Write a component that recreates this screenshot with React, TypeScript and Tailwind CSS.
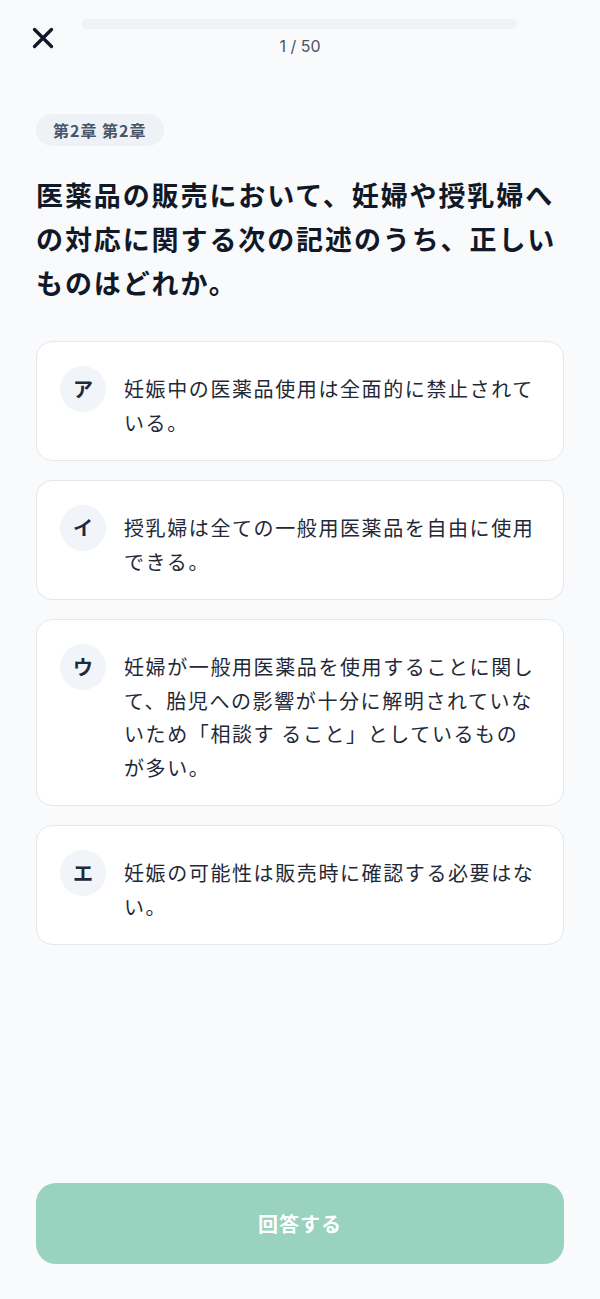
// Quiz question screen — single choice, nothing selected yet

type Option = {
  key: string;
  text: string;
};

const options: Option[] = [
  { key: 'ア', text: '妊娠中の医薬品使用は全面的に禁止されている。' },
  { key: 'イ', text: '授乳婦は全ての一般用医薬品を自由に使用できる。' },
  {
    key: 'ウ',
    text: '妊婦が一般用医薬品を使用することに関して、胎児への影響が十分に解明されていないため「相談す ること」としているものが多い。',
  },
  { key: 'エ', text: '妊娠の可能性は販売時に確認する必要はない。' },
];

function CloseIcon() {
  return (
    <svg width="22" height="22" viewBox="0 0 22 22" fill="none" aria-hidden="true">
      <path
        d="M2.5 2.5L19.5 19.5M19.5 2.5L2.5 19.5"
        stroke="#0f172a"
        strokeWidth="3.3"
        strokeLinecap="round"
      />
    </svg>
  );
}

function OptionCard({ option }: { option: Option }) {
  return (
    <button
      type="button"
      className="flex w-full items-start gap-[18px] rounded-2xl border border-[#e5e7eb] bg-white pb-[21px] pl-[23px] pr-6 pt-6 text-left"
    >
      <span className="flex h-[46px] w-[46px] shrink-0 items-center justify-center rounded-full bg-[#f1f5f9] text-[20px] font-bold text-[#1e293b]">
        {option.key}
      </span>
      <span className="mt-[6px] flex-1 text-[20px] leading-[33.5px] tracking-[1.6px] text-[#1f2937]">
        {option.text}
      </span>
    </button>
  );
}

export default function App() {
  const current = 1;
  const total = 50;
  const progress = (current / total) * 100;

  return (
    <div className="flex min-h-screen flex-col bg-[#f9fafb] font-['Noto_Sans_CJK_JP','Noto_Sans',sans-serif]">
      {/* Header: close + progress */}
      <header className="grid grid-cols-[50px_1fr_50px] px-8 pt-[19px]">
        <button type="button" aria-label="閉じる" className="mt-[8px] self-start">
          <CloseIcon />
        </button>
        <div className="flex flex-col items-center">
          <div className="h-[10px] w-full overflow-hidden rounded-full bg-[#f1f4f7]">
            <div
              className="h-full rounded-full bg-[#edf5f2]"
              style={{ width: `${progress}%` }}
            />
          </div>
          <p className="mt-[5px] font-['Inter',sans-serif] text-[16px] leading-6 text-[#4b5563]">
            {current} / {total}
          </p>
        </div>
        <div />
      </header>

      {/* Question */}
      <main className="px-9 pt-[56px]">
        <span className="inline-flex h-8 items-center rounded-full bg-[#eef2f6] px-[17px] text-[16px] font-bold tracking-[1px] text-[#475569]">
          第2章 第2章
        </span>

        <h1 className="mt-[27px] text-[27px] font-bold leading-[44px] tracking-[1.9px] text-[#111827]">
          医薬品の販売において、妊婦や授乳婦への対応に関する次の記述のうち、正しいものはどれか。
        </h1>

        <div className="mt-[36px] flex flex-col gap-[19px]">
          {options.map((o) => (
            <OptionCard key={o.key} option={o} />
          ))}
        </div>
      </main>

      {/* Submit */}
      <footer className="mt-auto px-9 pb-[35px]">
        <button
          type="button"
          disabled
          className="flex h-[81px] w-full items-center justify-center rounded-[20px] bg-[#99d2bf] text-[20px] font-bold tracking-[1px] text-white"
        >
          回答する
        </button>
      </footer>
    </div>
  );
}
